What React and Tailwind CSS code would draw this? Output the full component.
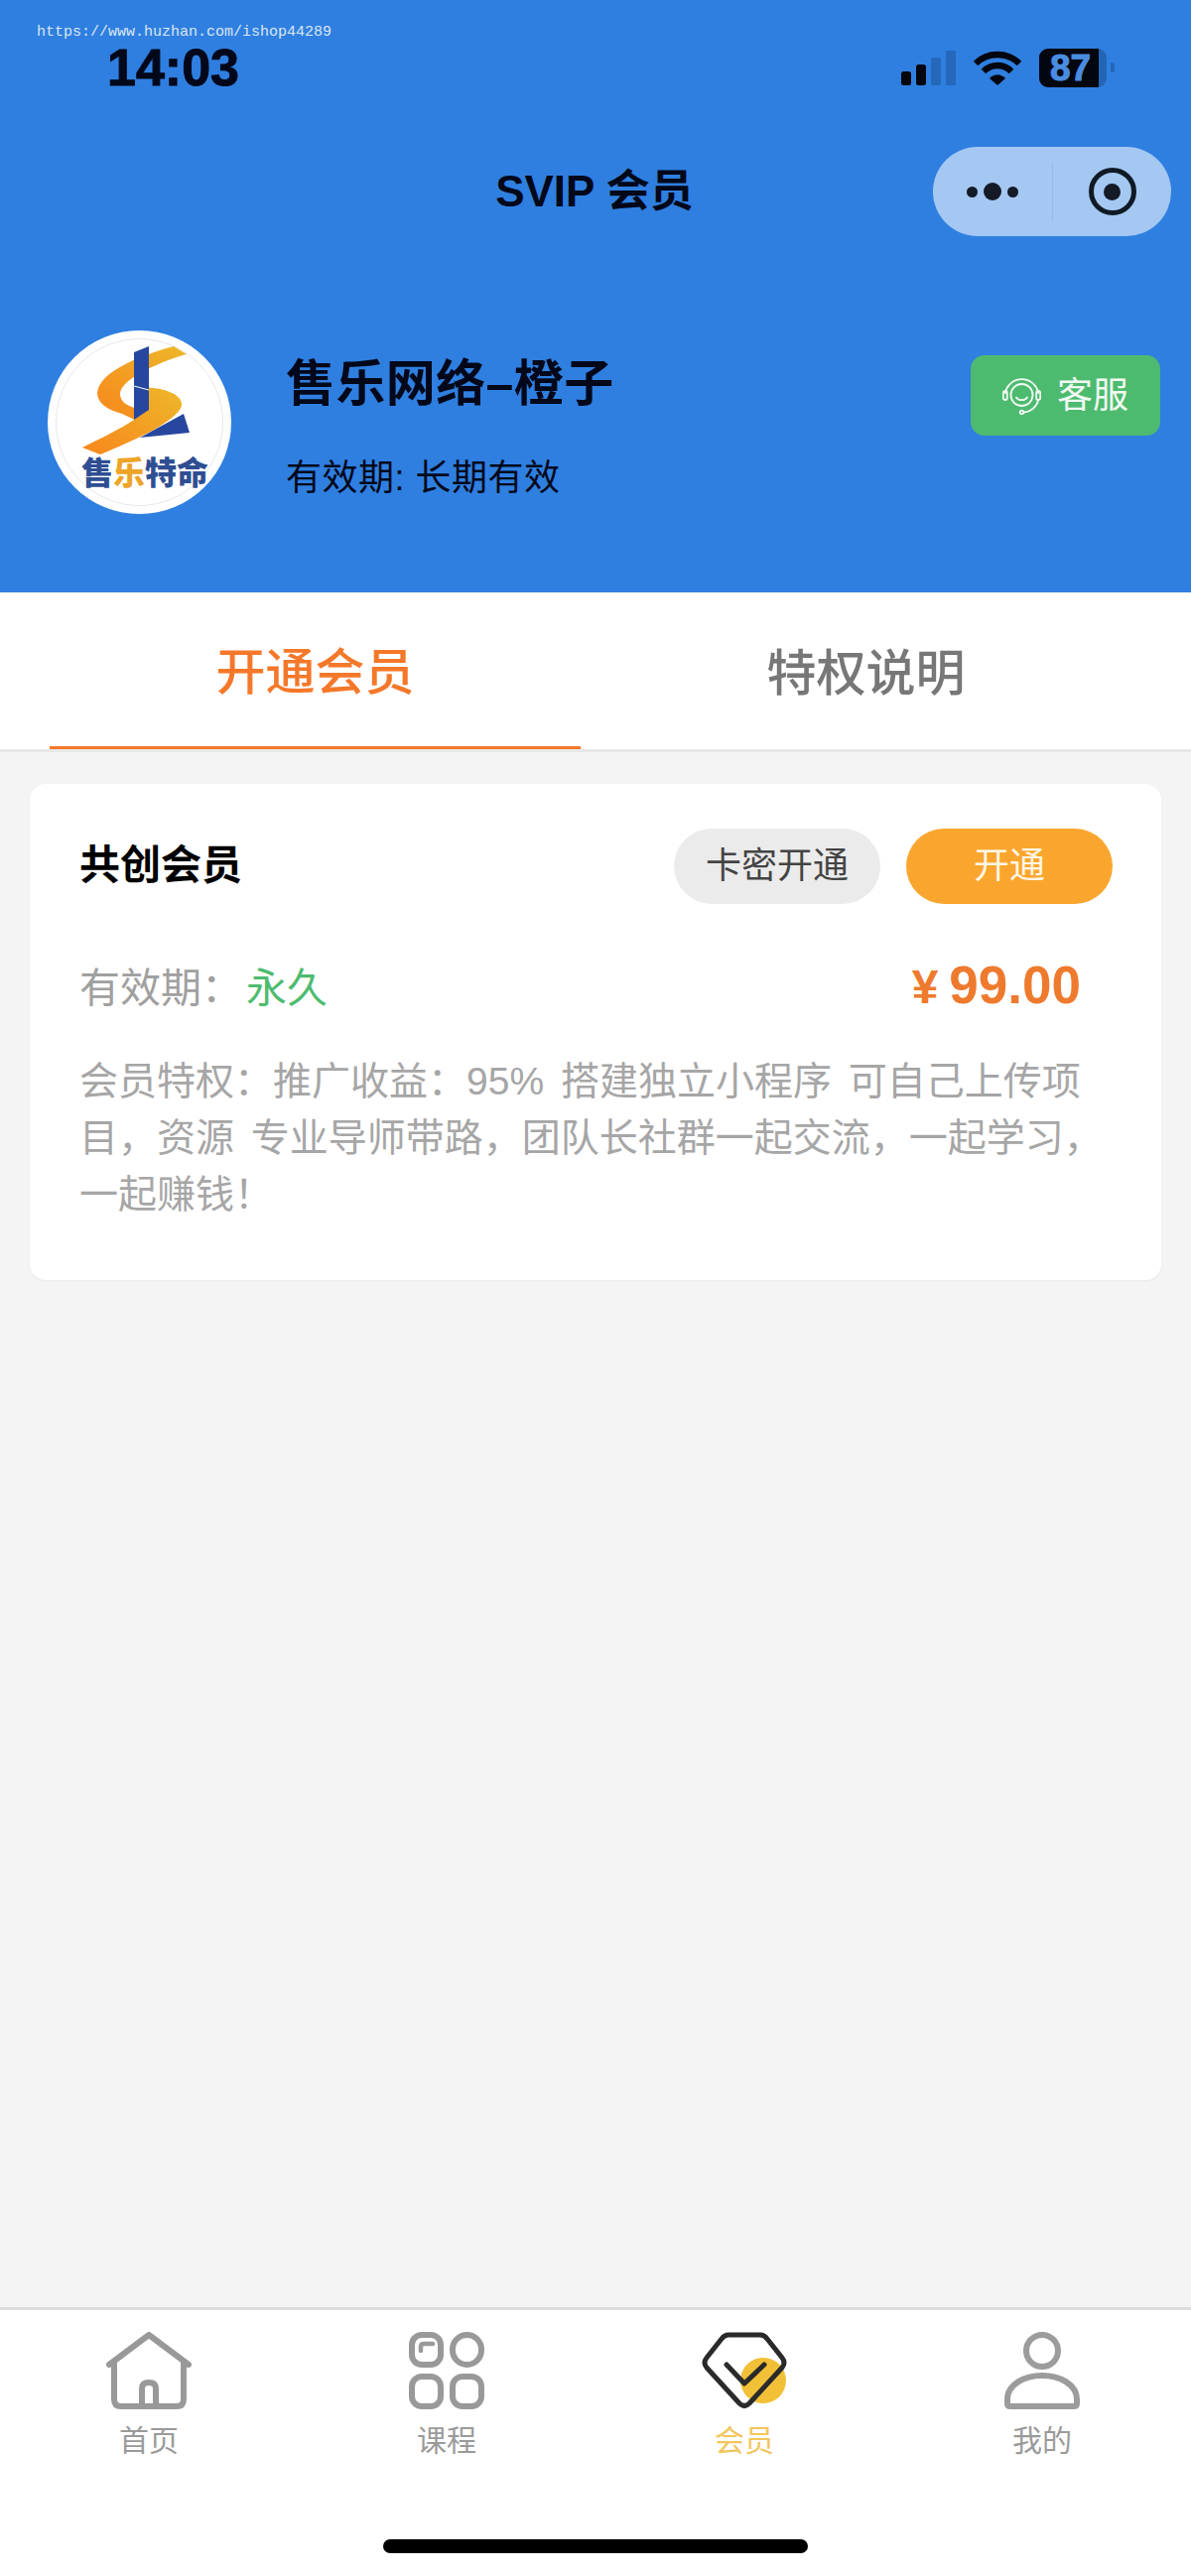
import React from 'react';

const cjk = "font-['Liberation_Sans','Noto_Sans_CJK_SC',sans-serif]";

const Logo = () => (
  <svg viewBox="0 0 185 185" className="w-full h-full">
    <defs>
      <linearGradient id="sBand" x1="0" y1="1" x2="1" y2="0">
        <stop offset="0" stopColor="#f7861c" />
        <stop offset="1" stopColor="#eeb82a" />
      </linearGradient>
    </defs>
    <circle cx="92.5" cy="92.5" r="84" fill="none" stroke="#e4e8ee" strokeWidth="1" />
    <path d="M137 84 L143 103 L93 108 Z" fill="#27479f" />
    <path d="M127 16 L140 24 C118 30 72 48 73 65 C74 72 80 76 88 78 L92 92 L75 84 C60 80 50 73 50 63 C52 40 98 24 127 16 Z" fill="url(#sBand)" />
    <path d="M87 57 C110 56 137 62 135 76 C130 92 85 112 53 125 L35 118 C55 108 72 100 87 90 Z" fill="url(#sBand)" />
    <path d="M87 22 L102 16 L102 80 L87 90 Z" fill="#27479f" />
    <path d="M87 56 L102 60" stroke="#fff" strokeWidth="1" />
    <text x="34" y="155" fontSize="32" fontWeight="900" fontFamily="'Noto Sans CJK SC', sans-serif" fill="#2f4e92">
      售<tspan fill="#eda428">乐</tspan>特命
    </text>
  </svg>
);

const StatusIcons = () => (
  <div className="flex items-center">
    <svg width="55" height="35" viewBox="0 0 55 35">
      <rect x="0" y="21" width="10" height="14" rx="2.5" fill="#02060f" />
      <rect x="15" y="14" width="10" height="21" rx="2.5" fill="#02060f" />
      <rect x="30" y="7" width="10" height="28" rx="1.5" fill="#2568bb" />
      <rect x="45" y="0" width="10" height="35" rx="1.5" fill="#2568bb" />
    </svg>
    <svg width="48" height="35" viewBox="0 0 48 35" className="ml-[18px]" fill="none" stroke="#02060f" strokeWidth="6.5">
      <path d="M2 13 C14 1 34 1 46 13" />
      <path d="M10 21 C18 13 30 13 38 21" />
      <path d="M16 28 L24 35 L32 28 C27 23 21 23 16 28 Z" fill="#02060f" strokeWidth="0" />
    </svg>
    <div className="ml-[18px] flex items-center">
      <div className="relative w-[68px] h-[39px] rounded-[9px] overflow-hidden bg-[#2466b5] flex">
        <div className="w-[60px] h-full bg-[#02060f] flex items-center justify-center pl-[3px]">
          <span className="font-['Liberation_Sans',sans-serif] font-bold text-[37px] leading-none text-[#4a8de0] [-webkit-text-stroke:1px_#4a8de0]">87</span>
        </div>
      </div>
      <div className="ml-[4px] w-[4px] h-[10px] rounded-r-[3px] bg-[#2466b5]" />
    </div>
  </div>
);

const Capsule = () => (
  <div className="w-[240px] h-[90px] rounded-full bg-[#a4c8f2] flex items-center justify-self-end">
    <div className="w-[120px] flex items-center justify-center gap-[6px]">
      <span className="w-[11px] h-[11px] rounded-full bg-[#141a26]" />
      <span className="w-[18px] h-[18px] rounded-full bg-[#141a26]" />
      <span className="w-[11px] h-[11px] rounded-full bg-[#141a26]" />
    </div>
    <div className="w-px h-[60px] bg-[#95bbe8]" />
    <div className="flex-1 flex items-center justify-center">
      <div className="w-[48px] h-[48px] rounded-full border-[5px] border-[#101a24] flex items-center justify-center">
        <span className="w-[17px] h-[17px] rounded-full bg-[#141a26]" />
      </div>
    </div>
  </div>
);

const Headset = () => (
  <svg width="39" height="39" viewBox="0 0 39 39" fill="none" stroke="#f1faf2" strokeWidth="1.8" strokeLinecap="round">
    <path d="M2.8 17 A 17 17 0 0 1 36.2 17" />
    <circle cx="19.5" cy="19" r="11" />
    <path d="M14 21.5 C16 25 23 25 25 21.5" />
    <rect x="0.8" y="15" width="4" height="9" rx="2" />
    <rect x="34.2" y="15" width="4" height="9" rx="2" />
    <path d="M36 24 C35 31 28 36 22 36.5" />
    <circle cx="19.5" cy="36.5" r="1.8" />
  </svg>
);

const HomeIcon = () => (
  <svg width="86" height="78" viewBox="0 0 86 78" fill="none" stroke="#999" strokeWidth="6" strokeLinejoin="round" strokeLinecap="round">
    <path d="M3 33 L43 3 L83 33" />
    <path d="M8 31 V68 Q8 75 15 75 H71 Q78 75 78 68 V31" />
    <path d="M36 75 V57 Q36 51 43 51 Q50 51 50 57 V75" />
  </svg>
);

const CourseIcon = () => (
  <svg width="76" height="78" viewBox="0 0 76 78" fill="none" stroke="#999" strokeWidth="6">
    <rect x="3" y="3" width="29" height="30" rx="10" />
    <rect x="44" y="3" width="29" height="30" rx="14.5" />
    <rect x="3" y="45" width="29" height="30" rx="10" />
    <rect x="44" y="45" width="29" height="30" rx="10" />
    <path d="M12 19 V15 Q12 12 15 12 H24" strokeWidth="4.5" strokeLinecap="round" />
  </svg>
);

const MemberIcon = () => (
  <svg width="86" height="78" viewBox="0 0 86 78" fill="none" stroke="#2a2a2a" strokeWidth="5" strokeLinejoin="round" strokeLinecap="round">
    <circle cx="62" cy="49" r="23" fill="#f2c037" stroke="none" />
    <path d="M27 3 H59 Q63 3 66 7 L81 26 Q85 31 81 36 L48 72 Q43 77 38 72 L5 36 Q1 31 5 26 L20 7 Q23 3 27 3 Z" />
    <path d="M25 33 L43 52 L63 33" />
  </svg>
);

const UserIcon = () => (
  <svg width="76" height="78" viewBox="0 0 76 78" fill="none" stroke="#9c9c9c" strokeWidth="6" strokeLinejoin="round">
    <circle cx="38" cy="19" r="16" />
    <path d="M3 72 V68 C3 53 20 44 38 44 C56 44 73 53 73 68 V72 Q73 75 70 75 H6 Q3 75 3 72 Z" />
  </svg>
);

const tabs = [
  { label: '首页', icon: <HomeIcon />, color: 'text-[#9a9a9a]' },
  { label: '课程', icon: <CourseIcon />, color: 'text-[#9a9a9a]' },
  { label: '会员', icon: <MemberIcon />, color: 'text-[#f2c65c]' },
  { label: '我的', icon: <UserIcon />, color: 'text-[#9a9a9a]' },
];

export default function App() {
  return (
    <div className={`relative w-[1200px] h-[2596px] flex flex-col bg-[#f4f4f4] overflow-hidden ${cjk}`}>
      {/* Header */}
      <div className="h-[597px] bg-[#2f7fe0] text-[#02081a]">
        <div className="relative h-[148px] pt-[48px] pl-[108px] pr-[77px]">
          <span className="absolute left-[37px] top-[24px] font-['Liberation_Mono',monospace] text-[15px] leading-[17px] text-[#dbe6f2]">
            https://www.huzhan.com/ishop44289
          </span>
          <div className="flex items-center justify-between h-[40px]">
            <span className="font-bold text-[52px] leading-none [-webkit-text-stroke:1px_#02081a]">14:03</span>
            <StatusIcons />
          </div>
        </div>

        <div className="grid grid-cols-[1fr_auto_1fr] items-center pr-[20px]">
          <div />
          <div className="font-bold text-[44px] leading-none whitespace-nowrap pl-[18px]">
            SVIP 会员
          </div>
          <Capsule />
        </div>

        <div className="flex items-start mt-[95px] pl-[48px] pr-[31px]">
          <div className="w-[185px] h-[185px] rounded-full bg-white overflow-hidden">
            <Logo />
          </div>
          <div className="ml-[55px] pt-[24px]">
            <div className="text-[50px] leading-[60px] font-semibold tracking-[0.4px]">售乐网络–橙子</div>
            <div className="mt-[40px] text-[36px] leading-[50px] tracking-[0.5px]">有效期: 长期有效</div>
          </div>
          <div className="ml-auto mt-[25px] w-[191px] h-[81px] rounded-[14px] bg-[#4dbb6f] flex items-center justify-center gap-[16px] text-[36px] text-[#f1faf2]">
            <Headset />
            <span>客服</span>
          </div>
        </div>
      </div>

      {/* Tabs */}
      <div className="h-[161px] bg-white border-b-[3px] border-[#e8e8e8] flex pl-[50px] gap-[20px] text-[50px] font-medium">
        <div className="w-[535px] h-full border-b-[3px] border-[#f5782a] text-[#f5782a] flex items-center justify-center pt-[7px]">
          开通会员
        </div>
        <div className="w-[535px] h-full text-[#777] flex items-center justify-center pt-[7px]">
          特权说明
        </div>
      </div>

      {/* Card */}
      <div className="flex-1 px-[30px] pt-[32px]">
        <div className="h-[500px] bg-white rounded-[16px] shadow-[0_1px_3px_rgba(0,0,0,0.05)] pt-[45px] pl-[50px] pr-[49px]">
          <div className="flex items-center justify-between">
            <span className="text-[41px] font-bold text-black">共创会员</span>
            <div className="flex gap-[26px] text-[36px]">
              <div className="w-[208px] h-[76px] rounded-full bg-[#ebebeb] text-[#444] flex items-center justify-center">卡密开通</div>
              <div className="w-[208px] h-[76px] rounded-full bg-[#faa62e] text-[#fff6e5] flex items-center justify-center">开通</div>
            </div>
          </div>
          <div className="mt-[41px] flex items-center justify-between pr-[32px]">
            <div className="text-[41px] leading-[66px] text-[#a0a0a0]">
              有效期：<span className="ml-[4px] text-[#4dbb6f]">永久</span>
            </div>
            <div className="text-[#ee7a2e] font-semibold leading-[66px] pt-[8px]">
              <span className="text-[48px]">¥</span>
              <span className="text-[53px] ml-[11px]">99.00</span>
            </div>
          </div>
          <p className="mt-[22px] text-[39px] leading-[57px] text-[#a6a6a6] [word-spacing:6px]">
            会员特权：推广收益：95% 搭建独立小程序 可自己上传项目，资源 专业导师带路，团队长社群一起交流，一起学习，一起赚钱！
          </p>
        </div>
      </div>

      {/* Bottom nav */}
      <div className="h-[271px] bg-white border-t-[3px] border-[#dcdcdc] pt-[22px] relative">
        <div className="grid grid-cols-4">
          {tabs.map((t) => (
            <div key={t.label} className="flex flex-col items-center">
              <div className="h-[78px] flex items-center justify-center">{t.icon}</div>
              <span className={`mt-[12px] text-[30px] leading-[40px] ${t.color}`}>{t.label}</span>
            </div>
          ))}
        </div>
        <div className="absolute bottom-[23px] left-[386px] w-[428px] h-[14px] rounded-full bg-black" />
      </div>
    </div>
  );
}
